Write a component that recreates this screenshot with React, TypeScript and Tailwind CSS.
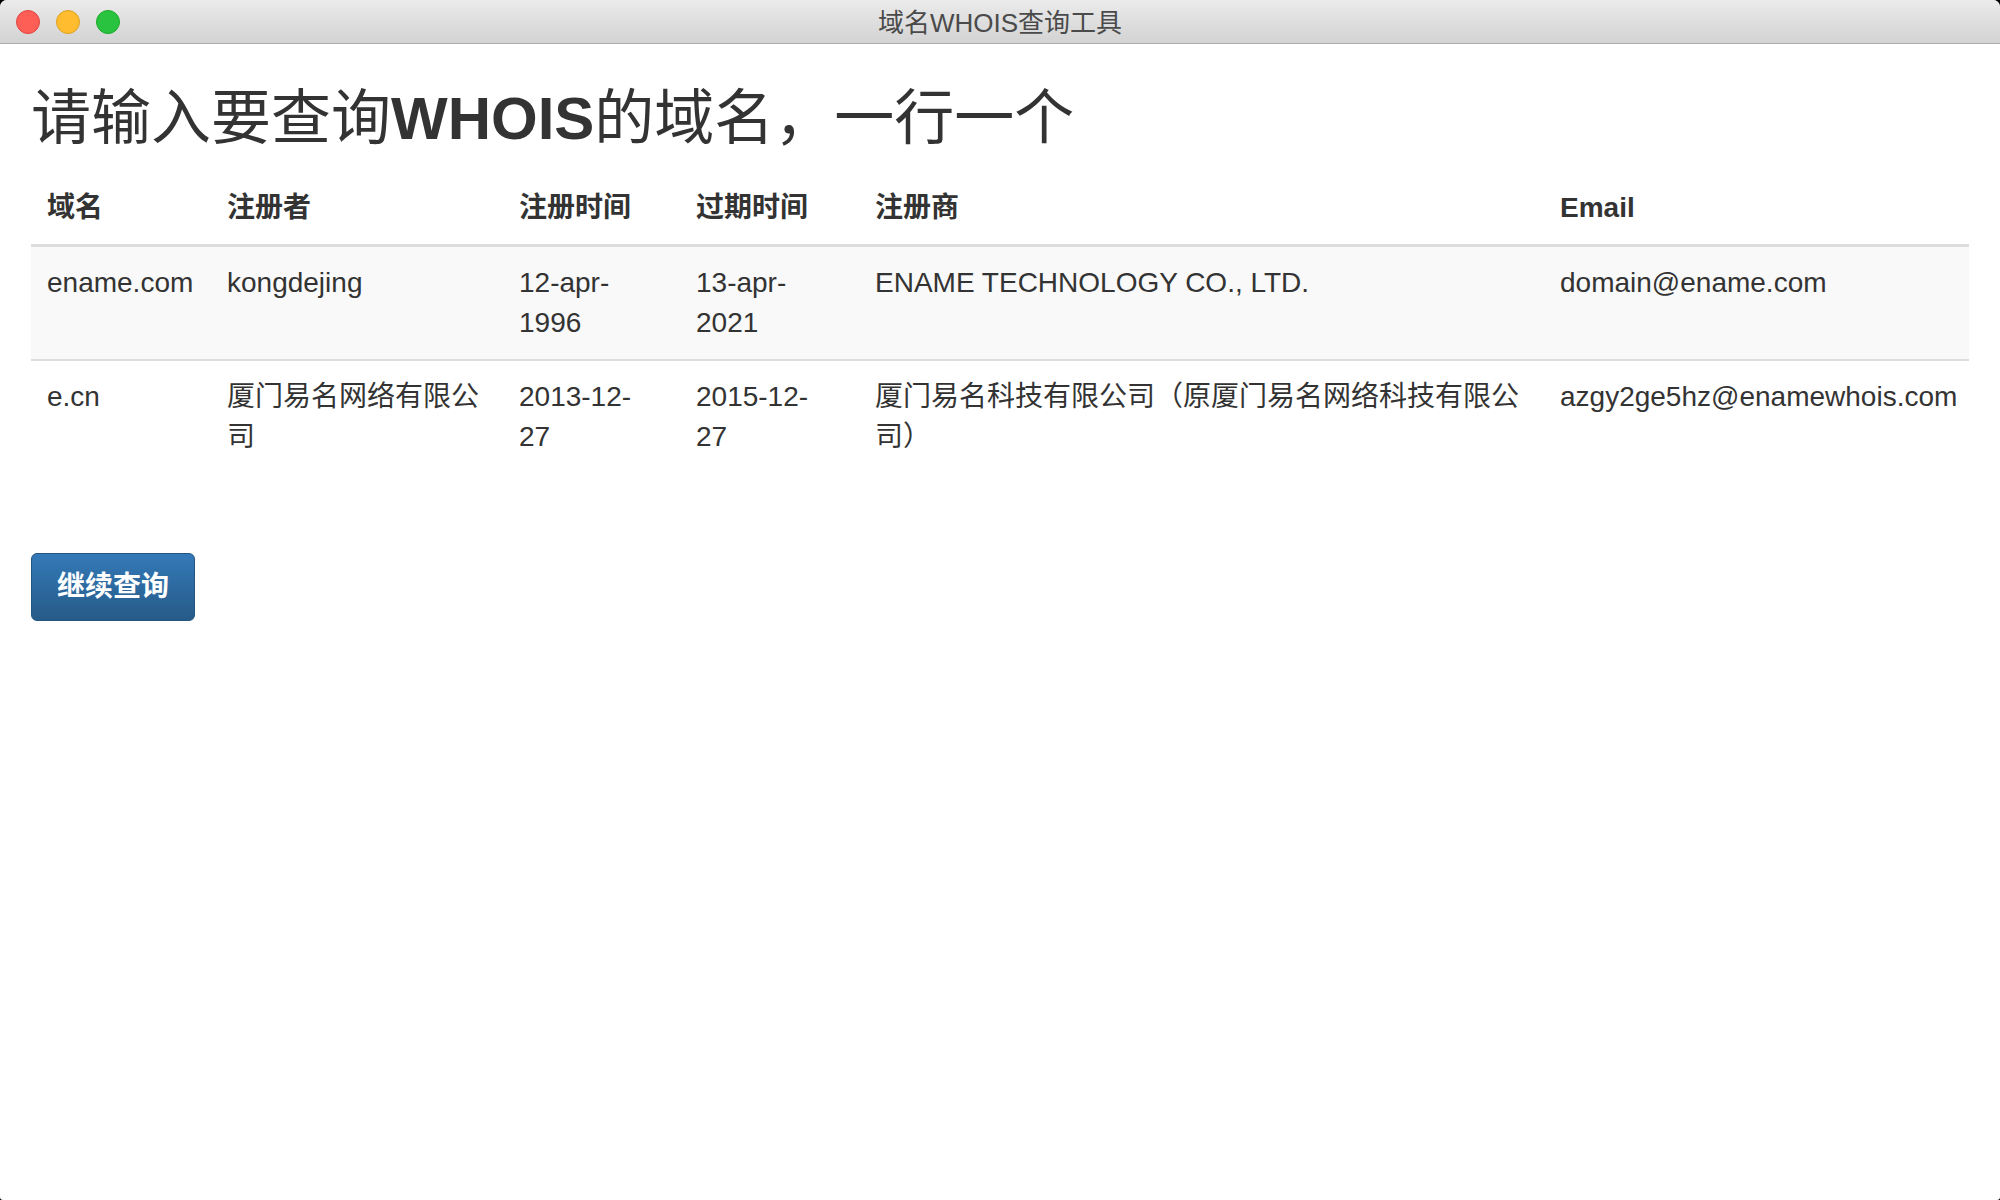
import React from 'react'

type Row = {
  domain: string
  owner: React.ReactNode
  created: React.ReactNode
  expires: React.ReactNode
  registrar: string
  email: string
}

const rows: Row[] = [
  {
    domain: 'ename.com',
    owner: 'kongdejing',
    created: (
      <>
        12-apr-
        <br />
        1996
      </>
    ),
    expires: (
      <>
        13-apr-
        <br />
        2021
      </>
    ),
    registrar: 'ENAME TECHNOLOGY CO., LTD.',
    email: 'domain@ename.com'
  },
  {
    domain: 'e.cn',
    owner: '厦门易名网络有限公司',
    created: (
      <>
        2013-12-
        <br />
        27
      </>
    ),
    expires: (
      <>
        2015-12-
        <br />
        27
      </>
    ),
    registrar: '厦门易名科技有限公司（原厦门易名网络科技有限公司）',
    email: 'azgy2ge5hz@enamewhois.com'
  }
]

const headers = ['域名', '注册者', '注册时间', '过期时间', '注册商', 'Email']
const widths = ['w-[180px]', 'w-[292px]', 'w-[177px]', 'w-[179px]', 'w-[685px]', '']

const TitleBar = () => (
  <div className="grid h-[44px] grid-cols-[1fr_auto_1fr] items-center border-b border-[#ababab] bg-gradient-to-b from-[#ebebeb] to-[#d3d3d3]">
    <div className="flex items-center gap-4 pl-4">
      <span className="h-6 w-6 rounded-full border border-[#e0443e] bg-[#fd5f57]" />
      <span className="h-6 w-6 rounded-full border border-[#dea123] bg-[#febc2e]" />
      <span className="h-6 w-6 rounded-full border border-[#1aab29] bg-[#29c33f]" />
    </div>
    <div className="pt-[2px] text-[26px] leading-none text-[#4a4a4a]">域名WHOIS查询工具</div>
    <div />
  </div>
)

export default function App() {
  return (
    <div className="min-h-[1200px] bg-black font-['Liberation_Sans','Noto_Sans_CJK_SC',sans-serif] text-[#333]">
      <div className="flex h-[1200px] flex-col overflow-hidden rounded-t-[7px] rounded-b-[3px] bg-white">
        <TitleBar />
        <div className="px-[31px] pt-[42px]">
          <h1 className="text-[60px] leading-[66px] font-normal">
            请输入要查询<span className="font-bold">WHOIS</span>的域名，一行一个
          </h1>

          <table className="mt-[20px] w-full table-fixed border-collapse text-left text-[28px] leading-[40px]">
            <thead>
              <tr className="border-b-[3px] border-[#ddd]">
                {headers.map((h, i) => (
                  <th key={h} className={`p-4 align-bottom font-bold ${widths[i]}`}>
                    {h}
                  </th>
                ))}
              </tr>
            </thead>
            <tbody>
              {rows.map((r, i) => (
                <tr
                  key={r.domain}
                  className={i === 0 ? 'bg-[#f9f9f9]' : 'border-t-2 border-[#ddd]'}
                >
                  <td className="p-4 align-top">{r.domain}</td>
                  <td className="p-4 align-top">{r.owner}</td>
                  <td className="p-4 align-top">{r.created}</td>
                  <td className="p-4 align-top">{r.expires}</td>
                  <td className="p-4 align-top">{r.registrar}</td>
                  <td className="p-4 align-top">{r.email}</td>
                </tr>
              ))}
            </tbody>
          </table>

          <button
            type="button"
            className="mt-[80px] rounded-[6px] border border-[#245580] bg-gradient-to-b from-[#347ab8] to-[#265a88] px-[25px] py-[13px] text-[28px] leading-[40px] font-bold text-white"
          >
            继续查询
          </button>
        </div>
      </div>
    </div>
  )
}
